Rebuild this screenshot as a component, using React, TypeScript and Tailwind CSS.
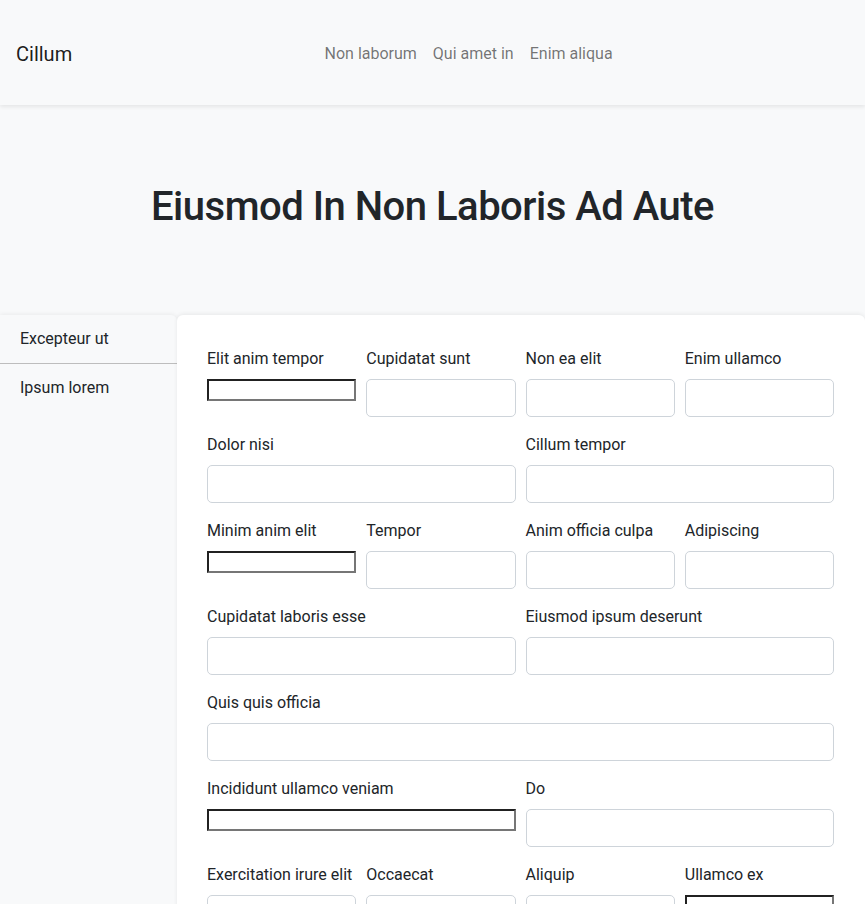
import React from "react";

type Field = { label: string; span: 1 | 2 | 4; plain?: boolean };

const rows: Field[][] = [
  [
    { label: "Elit anim tempor", span: 1, plain: true },
    { label: "Cupidatat sunt", span: 1 },
    { label: "Non ea elit", span: 1 },
    { label: "Enim ullamco", span: 1 },
  ],
  [
    { label: "Dolor nisi", span: 2 },
    { label: "Cillum tempor", span: 2 },
  ],
  [
    { label: "Minim anim elit", span: 1, plain: true },
    { label: "Tempor", span: 1 },
    { label: "Anim officia culpa", span: 1 },
    { label: "Adipiscing", span: 1 },
  ],
  [
    { label: "Cupidatat laboris esse", span: 2 },
    { label: "Eiusmod ipsum deserunt", span: 2 },
  ],
  [{ label: "Quis quis officia", span: 4 }],
  [
    { label: "Incididunt ullamco veniam", span: 2, plain: true },
    { label: "Do", span: 2 },
  ],
  [
    { label: "Exercitation irure elit", span: 1 },
    { label: "Occaecat", span: 1 },
    { label: "Aliquip", span: 1 },
    { label: "Ullamco ex", span: 1, plain: true },
  ],
];

function FieldBox({ f }: { f: Field }) {
  const spanCls =
    f.span === 4 ? "col-span-4" : f.span === 2 ? "col-span-2" : "col-span-1";
  return (
    <div className={spanCls + " flex flex-col"}>
      <label className="mb-2 text-base leading-6 text-[#212529] whitespace-nowrap">
        {f.label}
      </label>
      {f.plain ? (
        <input
          type="text"
          className="block w-full h-[22px] border-2 [border-style:inset] border-[#767676] bg-white"
        />
      ) : (
        <input
          type="text"
          className="block w-full h-[38px] rounded-[5px] border border-[#ced4da] bg-white"
        />
      )}
    </div>
  );
}

export default function App() {
  return (
    <div
      className="min-h-screen bg-[#f8f9fa] text-[#212529]"
      style={{ fontFamily: "Roboto, 'Liberation Sans', sans-serif" }}
    >
      <header className="relative z-10 h-[105px] pt-[2px] bg-[#f8f9fa] shadow-[0_2px_4px_rgba(0,0,0,0.08)] flex items-center px-4">
        <div className="text-[20px] leading-[30px] text-[rgba(0,0,0,0.9)] mr-4">
          Cillum
        </div>
        <nav className="flex-1 flex justify-center">
          <ul className="flex">
            {["Non laborum", "Qui amet in", "Enim aliqua"].map((t) => (
              <li key={t} className="px-2 text-base leading-6 text-[rgba(0,0,0,0.55)]">
                {t}
              </li>
            ))}
          </ul>
        </nav>
      </header>

      <section className="h-[210px] pb-[6px] flex items-center justify-center">
        <h1 className="text-[40px] leading-[48px] font-medium tracking-[-0.5px] text-[#212529]">
          Eiusmod In Non Laboris Ad Aute
        </h1>
      </section>

      <div className="flex items-stretch">
        <aside className="w-[177px] shrink-0 bg-[#f8f9fa] rounded-tr-[6px] shadow-[0_-1px_4px_rgba(0,0,0,0.06)]">
          <div className="px-5 py-3 text-base leading-6 border-b border-[#bdbdbd]">
            Excepteur ut
          </div>
          <div className="px-5 py-3 text-base leading-6">Ipsum lorem</div>
        </aside>
        <main className="flex-1 bg-white rounded-t-[6px] shadow-[0_-1px_4px_rgba(0,0,0,0.07)] pl-[30px] pr-[31px] pt-[32px] pb-10">
          <div className="grid grid-cols-4 gap-x-[10px] gap-y-4">
            {rows.map((r, i) => (
              <React.Fragment key={i}>
                {r.map((f) => (
                  <FieldBox key={f.label} f={f} />
                ))}
              </React.Fragment>
            ))}
          </div>
        </main>
      </div>
    </div>
  );
}
